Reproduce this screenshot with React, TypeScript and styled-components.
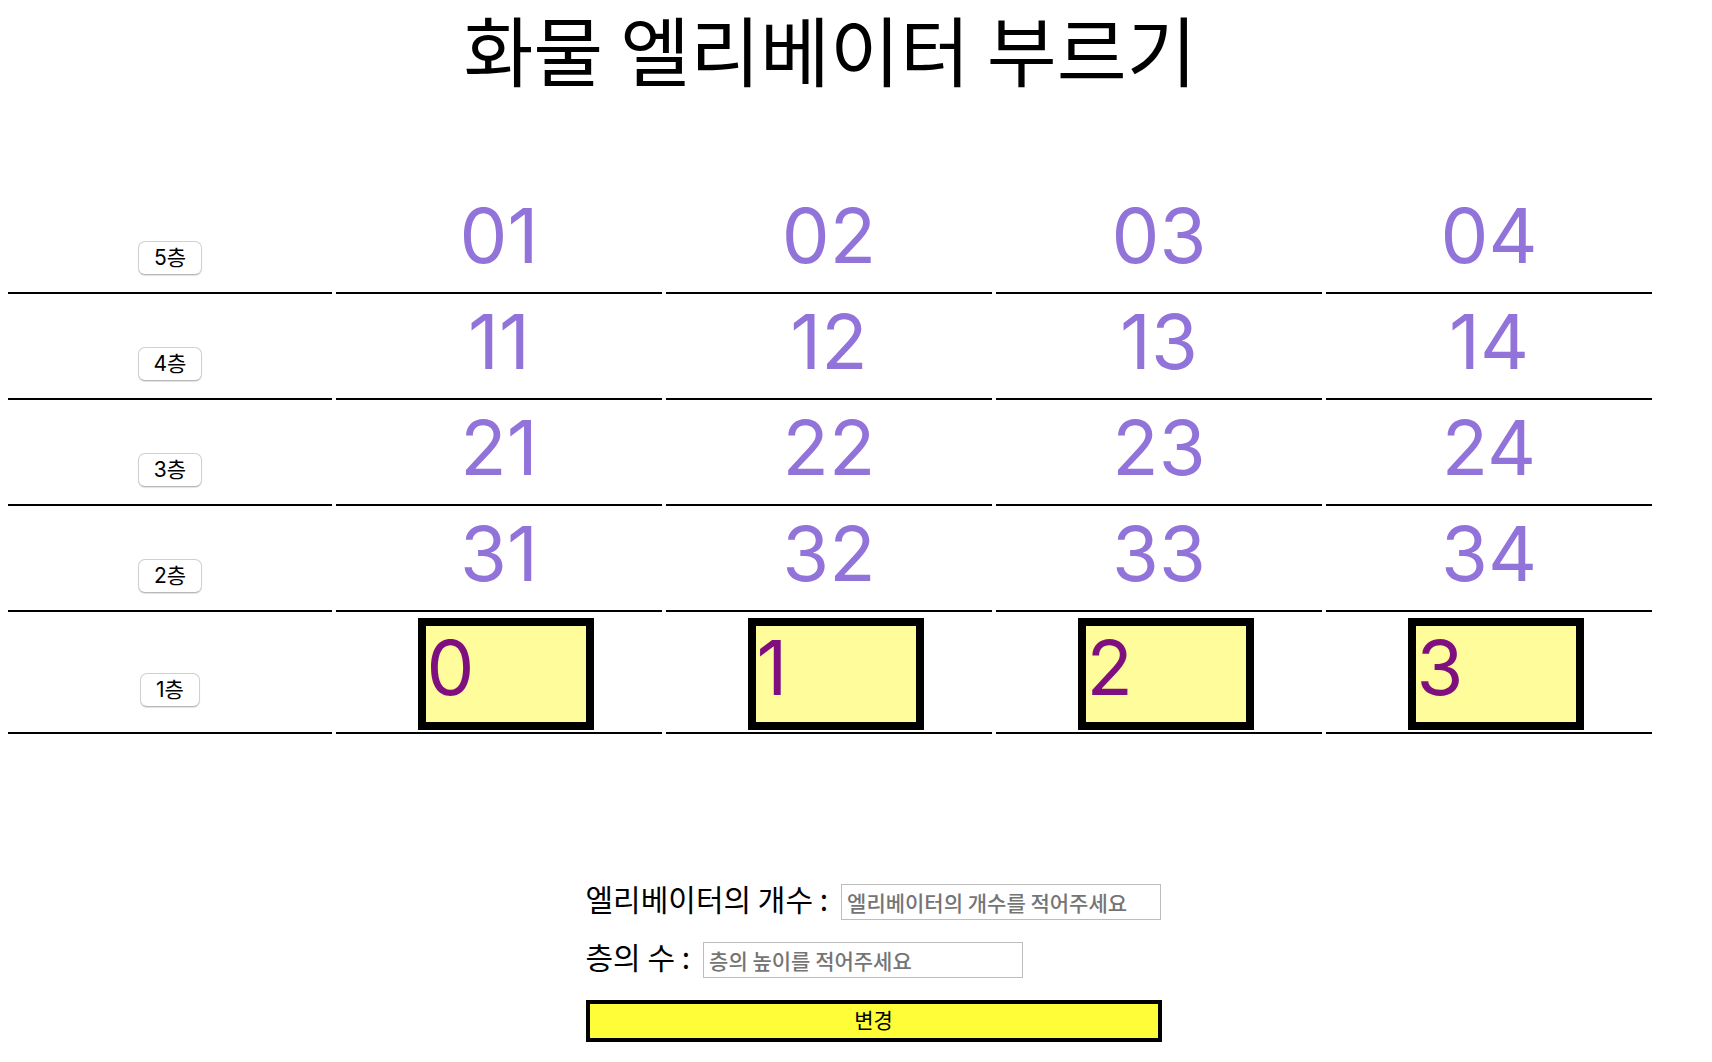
import React from "react";
import styled, { createGlobalStyle } from "styled-components";

const GlobalStyle = createGlobalStyle`
  body {
    margin: 0;
    background: #fff;
    color: #000;
    font-family: "Noto Sans CJK KR", sans-serif;
  }
`;

const Page = styled.main`
  padding: 0 56px 20px 4px;
`;

const Title = styled.h1`
  margin: 0 0 92px;
  font-size: 76px;
  font-weight: 400;
  line-height: 96px;
  text-align: center;
`;

const Shaft = styled.table`
  width: 100%;
  table-layout: fixed;
  border-collapse: separate;
  border-spacing: 4px;
`;

const FloorColumn = styled.col`
  width: 19.9%;
`;

const cell = `
  box-sizing: border-box;
  height: 102px;
  padding: 2px;
  border-bottom: 2px solid #000;
  font-family: Inter, "Noto Sans CJK KR", sans-serif;
  font-size: 76px;
  font-weight: 400;
  line-height: 82px;
  text-align: center;
  vertical-align: baseline;
`;

const FloorCell = styled.th`
  ${cell}
`;

const Cell = styled.td`
  ${cell}
  color: #9273da;
`;

const CallButton = styled.button`
  height: 34px;
  padding: 0 15px;
  border: 1px solid #d0d0d0;
  border-bottom-color: #b8b8b8;
  border-radius: 7px;
  background: #fff;
  box-shadow: 0 1px 1px rgba(0, 0, 0, 0.12);
  color: #000;
  font-family: Inter, "Noto Sans CJK KR", sans-serif;
  font-size: 21px;
  line-height: 30px;
  vertical-align: -2px;
`;

const Elevator = styled.div`
  width: 160px;
  height: 96px;
  margin-left: 25%;
  border: 8px solid #000;
  background: #fffc9c;
  color: #7f0f7f;
  text-align: left;
`;

const Settings = styled.form`
  display: flex;
  flex-direction: column;
  gap: 22px;
  width: 576px;
  margin: 146px 0 0 35.2%;
`;

const Field = styled.div`
  display: flex;
  align-items: baseline;
  gap: 13px;
  height: 36px;
`;

const Label = styled.label`
  font-size: 30px;
  line-height: 28px;
  white-space: nowrap;
`;

const Input = styled.input`
  box-sizing: border-box;
  width: 320px;
  height: 36px;
  padding: 0 5px;
  border: 1px solid #bdbdbd;
  background: #fff;
  font-family: inherit;
  font-size: 21px;
  font-weight: 500;

  &::placeholder {
    color: #757575;
  }
`;

const Submit = styled.button`
  height: 42px;
  padding: 0 0 4px;
  border: 4px solid #000;
  background: #fffd38;
  color: #000;
  font-family: inherit;
  font-size: 21px;
  font-weight: 400;
  line-height: 30px;
`;

const elevatorCount = 4;
const floorCount = 5;

export default function App() {
  const floors = Array.from({ length: floorCount }, (_, row) => floorCount - row);
  const shafts = Array.from({ length: elevatorCount }, (_, i) => i);

  return (
    <Page>
      <GlobalStyle />
      <Title>화물 엘리베이터 부르기</Title>
      <Shaft>
        <colgroup>
          <FloorColumn />
          {shafts.map((shaft) => (
            <col key={shaft} />
          ))}
        </colgroup>
        <tbody>
          {floors.map((floor, row) => (
            <tr key={floor}>
              <FloorCell scope="row">
                <CallButton type="button">{floor}층</CallButton>
              </FloorCell>
              {shafts.map((shaft) => (
                <Cell key={shaft}>
                  {floor === 1 ? <Elevator>{shaft}</Elevator> : `${row}${shaft + 1}`}
                </Cell>
              ))}
            </tr>
          ))}
        </tbody>
      </Shaft>
      <Settings onSubmit={(event) => event.preventDefault()}>
        <Field>
          <Label htmlFor="elevators">엘리베이터의 개수 :</Label>
          <Input id="elevators" placeholder="엘리베이터의 개수를 적어주세요" />
        </Field>
        <Field>
          <Label htmlFor="floors">층의 수 :</Label>
          <Input id="floors" placeholder="층의 높이를 적어주세요" />
        </Field>
        <Submit type="submit">변경</Submit>
      </Settings>
    </Page>
  );
}
